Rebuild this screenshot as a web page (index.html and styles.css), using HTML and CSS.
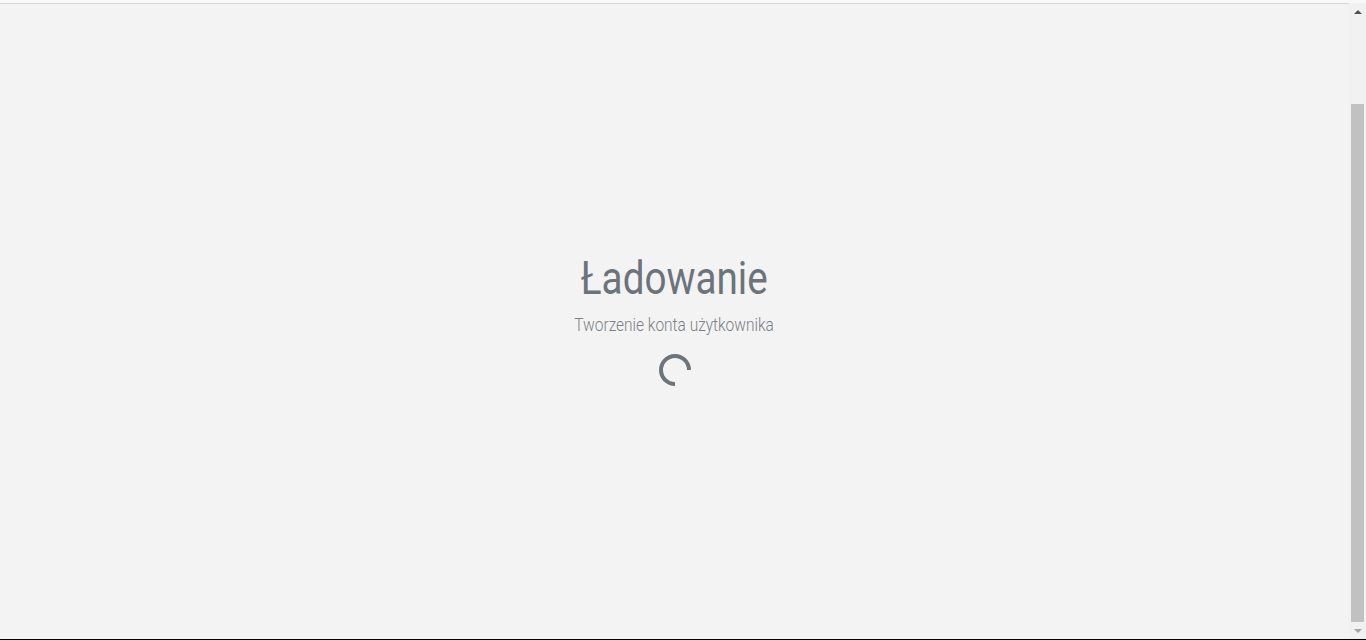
FILE: index.html
```html
<!DOCTYPE html>
<html lang="pl">
<head>
<meta charset="utf-8">
<link rel="stylesheet" href="styles.css">
<title>Ładowanie</title>
</head>
<body>
<div class="window">
  <main class="page">
    <div class="loader">
      <h1 class="title"><span>Ładowanie</span></h1>
      <p class="subtitle"><span>Tworzenie konta użytkownika</span></p>
      <svg class="spinner" width="32" height="32" viewBox="0 0 32 32">
        <path d="M30 16 A14 14 0 1 0 16 30" fill="none" stroke="#6c737b" stroke-width="4"/>
      </svg>
    </div>
  </main>
  <div class="scrollbar">
    <div class="arrow up"></div>
    <div class="track"><div class="thumb"></div></div>
    <div class="arrow down"></div>
  </div>
</div>
<div class="bottom-line"></div>
</body>
</html>
```
FILE: styles.css
```css
html, body {
  margin: 0;
  padding: 0;
  height: 100%;
  overflow: hidden;
  background: #f3f3f3;
}
body {
  display: flex;
  flex-direction: column;
  border-top: 3px solid #f8f8f8;
  box-sizing: border-box;
  font-family: Roboto, "Liberation Sans", sans-serif;
}
.window {
  flex: 1;
  display: flex;
  min-height: 0;
}
.page {
  flex: 1;
  border-top: 1px solid #d6d6d6;
  display: flex;
  align-items: center;
  justify-content: center;
}
.loader {
  display: flex;
  flex-direction: column;
  align-items: center;
  margin-bottom: 6px;
}
.title {
  margin: 0;
  font-weight: 400;
  font-size: 46px;
  line-height: 54px;
  color: #6c737b;
}
.title span {
  display: inline-block;
  transform: scaleX(0.84);
}
.subtitle span {
  display: inline-block;
  transform: scaleX(0.86);
}
.subtitle {
  margin: 8px 0 0;
  font-size: 18px;
  line-height: 24px;
  color: #7a8087;
  font-weight: 300;
}
.spinner {
  margin-top: 17px;
  display: block;
}
.scrollbar {
  width: 17px;
  background: #f1f1f1;
  display: flex;
  flex-direction: column;
}
.arrow {
  height: 17px;
  display: flex;
  align-items: center;
  justify-content: center;
}
.arrow.up::before {
  content: "";
  border-left: 4px solid transparent;
  border-right: 4px solid transparent;
  border-bottom: 4px solid #505050;
}
.arrow.down::before {
  content: "";
  border-left: 4px solid transparent;
  border-right: 4px solid transparent;
  border-top: 4px solid #a3a3a3;
}
.track {
  flex: 1;
  padding: 84px 2px 0 2px;
  display: flex;
}
.thumb {
  flex: 1;
  background: #c1c1c1;
}
.bottom-line {
  height: 1px;
  background: #000;
}
```
